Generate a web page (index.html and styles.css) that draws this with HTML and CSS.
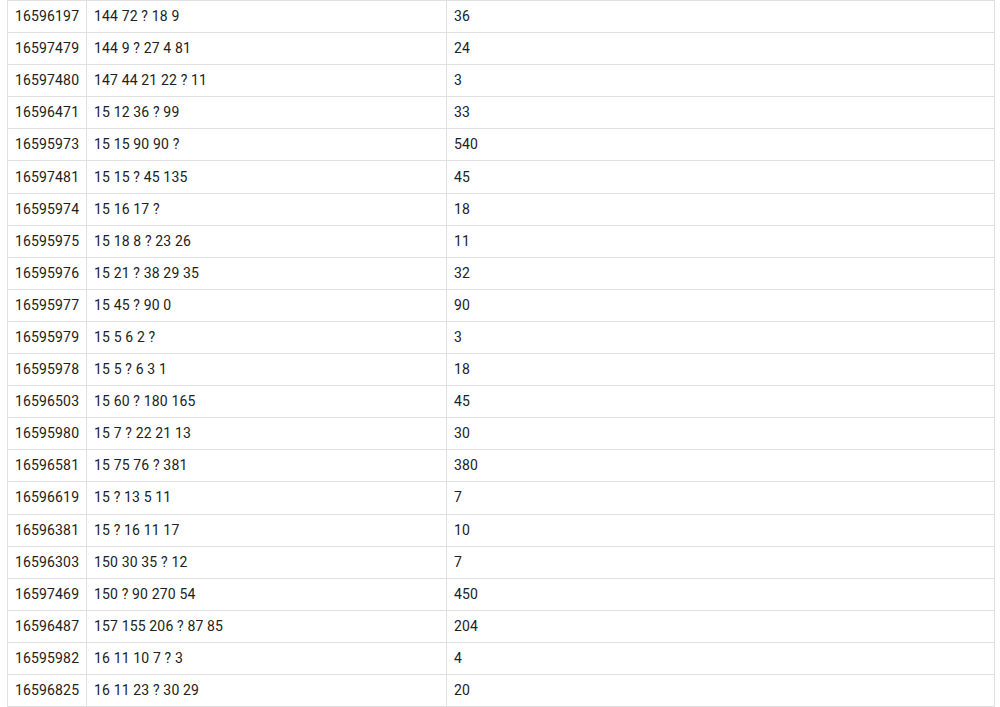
FILE: index.html
```html
<!DOCTYPE html>
<html>
<head>
<meta charset="utf-8">
<link rel="stylesheet" href="styles.css">
</head>
<body>
<div class="wrap">
<table class="grid">
<tbody>
<tr><td class="c-id">16596197</td><td class="c-q">144 72 ? 18 9</td><td class="c-a">36</td></tr>
<tr><td class="c-id">16597479</td><td class="c-q">144 9 ? 27 4 81</td><td class="c-a">24</td></tr>
<tr><td class="c-id">16597480</td><td class="c-q">147 44 21 22 ? 11</td><td class="c-a">3</td></tr>
<tr><td class="c-id">16596471</td><td class="c-q">15 12 36 ? 99</td><td class="c-a">33</td></tr>
<tr><td class="c-id">16595973</td><td class="c-q">15 15 90 90 ?</td><td class="c-a">540</td></tr>
<tr><td class="c-id">16597481</td><td class="c-q">15 15 ? 45 135</td><td class="c-a">45</td></tr>
<tr><td class="c-id">16595974</td><td class="c-q">15 16 17 ?</td><td class="c-a">18</td></tr>
<tr><td class="c-id">16595975</td><td class="c-q">15 18 8 ? 23 26</td><td class="c-a">11</td></tr>
<tr><td class="c-id">16595976</td><td class="c-q">15 21 ? 38 29 35</td><td class="c-a">32</td></tr>
<tr><td class="c-id">16595977</td><td class="c-q">15 45 ? 90 0</td><td class="c-a">90</td></tr>
<tr><td class="c-id">16595979</td><td class="c-q">15 5 6 2 ?</td><td class="c-a">3</td></tr>
<tr><td class="c-id">16595978</td><td class="c-q">15 5 ? 6 3 1</td><td class="c-a">18</td></tr>
<tr><td class="c-id">16596503</td><td class="c-q">15 60 ? 180 165</td><td class="c-a">45</td></tr>
<tr><td class="c-id">16595980</td><td class="c-q">15 7 ? 22 21 13</td><td class="c-a">30</td></tr>
<tr><td class="c-id">16596581</td><td class="c-q">15 75 76 ? 381</td><td class="c-a">380</td></tr>
<tr><td class="c-id">16596619</td><td class="c-q">15 ? 13 5 11</td><td class="c-a">7</td></tr>
<tr><td class="c-id">16596381</td><td class="c-q">15 ? 16 11 17</td><td class="c-a">10</td></tr>
<tr><td class="c-id">16596303</td><td class="c-q">150 30 35 ? 12</td><td class="c-a">7</td></tr>
<tr><td class="c-id">16597469</td><td class="c-q">150 ? 90 270 54</td><td class="c-a">450</td></tr>
<tr><td class="c-id">16596487</td><td class="c-q">157 155 206 ? 87 85</td><td class="c-a">204</td></tr>
<tr><td class="c-id">16595982</td><td class="c-q">16 11 10 7 ? 3</td><td class="c-a">4</td></tr>
<tr><td class="c-id">16596825</td><td class="c-q">16 11 23 ? 30 29</td><td class="c-a">20</td></tr>
</tbody>
</table>
</div>
</body>
</html>
```
FILE: styles.css
```css
html, body {
  margin: 0;
  padding: 0;
  background: #ffffff;
}
.wrap {
  padding: 0 5px 0 7px;
}
.grid {
  width: 988px;
  border-collapse: collapse;
  table-layout: fixed;
  font-family: Roboto, "Liberation Sans", sans-serif;
  font-size: 14px;
  letter-spacing: 0.15px;
  color: #212121;
}
.grid td {
  border: 1px solid #e0e0e0;
  height: 32.1px;
  padding: 0 7px 1px;
  box-sizing: border-box;
  white-space: nowrap;
  vertical-align: middle;
}
.c-id { width: 79px; }
.c-q { width: 360px; }
.c-a { width: auto; }
```
